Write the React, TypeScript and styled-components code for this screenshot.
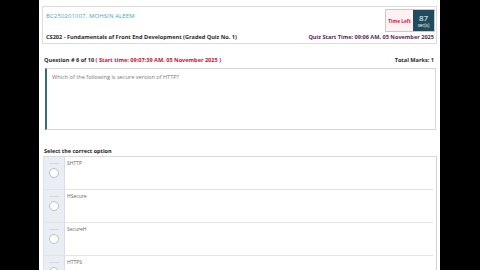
import styled, { createGlobalStyle } from "styled-components";

const GlobalStyle = createGlobalStyle`
	html, body {
		margin: 0;
		padding: 0;
		background: #000;
	}
	* {
		box-sizing: border-box;
	}
`;

const Page = styled.div`
	width: 480px;
	height: 270px;
	overflow: hidden;
	background: #000;
	padding-left: 39px;
	font-family: "Open Sans", "Liberation Sans", sans-serif;
`;

const Sheet = styled.div`
	width: 401px;
	height: 270px;
	overflow: hidden;
	background: #fff;
	padding: 6px 3px 0 3px;
`;

const HeaderCard = styled.div`
	border: 1px solid #dcdcdc;
	padding: 2px 1px 2px 3px;
	display: flex;
	flex-direction: column;
`;

const HeaderRow = styled.div`
	display: flex;
	justify-content: space-between;
	align-items: flex-start;
`;

const StudentName = styled.div`
	color: #3fa9bd;
	font-size: 6px;
	line-height: 8px;
	margin-top: 3px;
	letter-spacing: 0.1px;
`;

const Timer = styled.div`
	display: flex;
	height: 23px;
	border: 1px solid #c9c9c9;
`;

const TimeLabel = styled.div`
	width: 27px;
	background: #fdf1f3;
	color: #d2203f;
	font-size: 4.8px;
	font-weight: 700;
	display: flex;
	align-items: center;
	justify-content: center;
`;

const TimeCount = styled.div`
	width: 21px;
	background: #1f4b5c;
	color: #fff;
	display: flex;
	flex-direction: column;
	align-items: center;
	justify-content: center;
`;

const Seconds = styled.span`
	font-size: 8px;
	line-height: 9px;
`;

const Unit = styled.span`
	font-size: 4.5px;
	line-height: 6px;
`;

const SubRow = styled(HeaderRow)`
	margin-top: 1px;
	align-items: center;
	padding-right: 1px;
`;

const Course = styled.div<{ $color?: string }>`
	color: ${(p) => p.$color ?? "#2a2a2a"};
	font-size: 5.6px;
	line-height: 8px;
	font-weight: 700;
`;

const QuestionHead = styled.div`
	display: flex;
	justify-content: space-between;
	align-items: center;
	margin-top: 12px;
	padding: 0 3px 0 2px;
	font-size: 5.6px;
	line-height: 8px;
	font-weight: 700;
	color: #2a2a2a;
`;

const Highlight = styled.span`
	color: #c8102e;
`;

const QuestionBox = styled.div`
	margin: 4px 1px 0 3px;
	height: 62px;
	border: 1px solid #d6d6d6;
	border-left: 2px solid #3d6b78;
	padding: 4px 5px;
	color: #777;
	font-size: 5.6px;
	line-height: 8px;
`;

const SectionTitle = styled.div`
	margin-top: 17px;
	padding-left: 2px;
	font-size: 5.5px;
	line-height: 8px;
	font-weight: 700;
	color: #222;
`;

const OptionList = styled.div`
	margin-top: 1px;
	margin-left: 1px;
	border-top: 1px solid #dadada;
	border-right: 1px solid #d2d2d2;
	padding-right: 3px;
	height: 120px;
`;

const OptionRow = styled.div`
	display: flex;
	height: 33px;
	border-left: 1px solid #dfe3e8;
	border-bottom: 1px solid #e4e4e4;
`;

const RadioCell = styled.div`
	position: relative;
	width: 21px;
	background: #e9eef5;
	border-right: 1px solid #d7dde6;
	display: flex;
	justify-content: center;
	padding-top: 11px;

	&::before {
		content: "";
		position: absolute;
		top: 6px;
		left: 5px;
		width: 10px;
		height: 1px;
		background: #d3d9e2;
	}
`;

const Radio = styled.div`
	width: 10px;
	height: 10px;
	border-radius: 50%;
	background: #fff;
	border: 1px solid #b9bec6;
`;

const OptionText = styled.div`
	padding: 2px 0 0 2px;
	font-size: 5px;
	line-height: 8px;
	color: #666;
`;

const options = ["SHTTP", "HSecure", "SecureH", "HTTPS"];

export default function App() {
	return (
		<Page>
			<GlobalStyle />
			<Sheet>
				<HeaderCard>
					<HeaderRow>
						<StudentName>BC250201007, MOHSIN ALEEM</StudentName>
						<Timer>
							<TimeLabel>Time Left</TimeLabel>
							<TimeCount>
								<Seconds>87</Seconds>
								<Unit>sec(s)</Unit>
							</TimeCount>
						</Timer>
					</HeaderRow>
					<SubRow>
						<Course>CS202 - Fundamentals of Front End Development (Graded Quiz No. 1)</Course>
						<Course $color="#5a1f5c">Quiz Start Time: 09:06 AM, 05 November 2025</Course>
					</SubRow>
				</HeaderCard>

				<QuestionHead>
					<span>
						Question # 6 of 10 <Highlight>( Start time: 09:07:39 AM, 05 November 2025 )</Highlight>
					</span>
					<span>Total Marks: 1</span>
				</QuestionHead>
				<QuestionBox>Which of the following is secure version of HTTP?</QuestionBox>

				<SectionTitle>Select the correct option</SectionTitle>
				<OptionList>
					{options.map((o) => (
						<OptionRow key={o}>
							<RadioCell>
								<Radio />
							</RadioCell>
							<OptionText>{o}</OptionText>
						</OptionRow>
					))}
				</OptionList>
			</Sheet>
		</Page>
	);
}
